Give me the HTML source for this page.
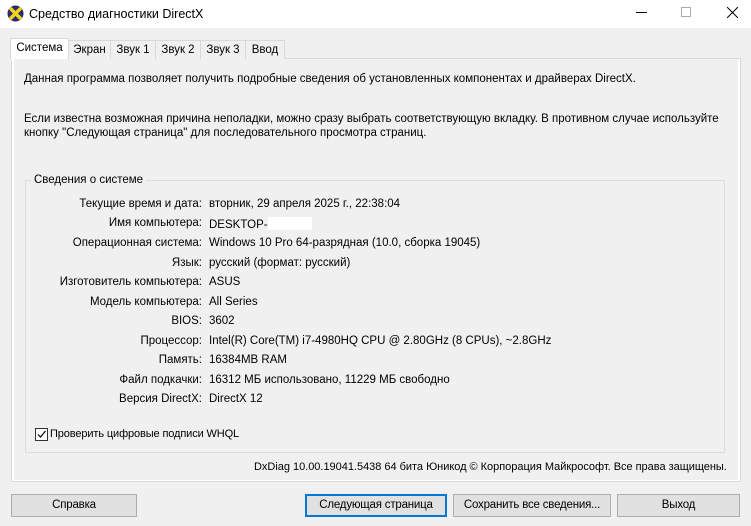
<!DOCTYPE html>
<html><head><meta charset="utf-8"><style>
*{margin:0;padding:0;box-sizing:border-box}
body{width:751px;height:526px;background:#f0f0f0;font-family:"Liberation Sans",sans-serif;font-size:11.5px;color:#000;position:relative;overflow:hidden}
.a{position:absolute;white-space:nowrap}
.tb{position:absolute;left:0;top:0;width:751px;height:28px;background:#fff}
.tab{position:absolute;top:40px;height:19px;border:1px solid #d9d9d9;border-bottom:none;background:#f0f0f0;padding:3px 0 0;text-align:center;white-space:nowrap}
.panel{position:absolute;left:11px;top:58px;width:730px;height:424px;border:1px solid #d9d9d9;background:#fff}
.grp{position:absolute;left:25px;top:180px;width:700px;height:273px;border:1px solid #dcdcdc}
.lbl{position:absolute;right:549px;white-space:nowrap}
.val{position:absolute;left:209px;white-space:nowrap}
.btn{position:absolute;top:494px;height:23px;border:1px solid #adadad;background:#e1e1e1;text-align:center;padding-top:4px;white-space:nowrap;font-size:11.5px;letter-spacing:-0.2px}
</style></head><body>
<div class="tb">
<svg class="a" style="left:7px;top:5px" width="17" height="17" viewBox="0 0 17 17"><circle cx="8.5" cy="8.5" r="8" fill="#2b2b6e"/><path d="M4 4 L13 13 M13 4 L4 13" stroke="#f2d21a" stroke-width="3.5" stroke-linecap="round"/></svg>
<div class="a" style="left:29px;top:7px;font-size:12.5px">Средство диагностики DirectX</div>
<div class="a" style="left:636px;top:12px;width:11px;height:1px;background:#000"></div>
<div class="a" style="left:681px;top:7px;width:10px;height:10px;border:1px solid #aaa"></div>
<svg class="a" style="left:727px;top:7px" width="11" height="11"><path d="M0 0L11 11M11 0L0 11" stroke="#000" stroke-width="1"/></svg>
</div>
<div class="panel"></div>
<div class="tab" style="left:68px;width:43px">Экран</div>
<div class="tab" style="left:110px;width:46px">Звук 1</div>
<div class="tab" style="left:155px;width:46px">Звук 2</div>
<div class="tab" style="left:200px;width:46px">Звук 3</div>
<div class="tab" style="left:245px;width:40px">Ввод</div>
<div class="tab" style="left:10px;top:38px;height:22px;width:59px;background:#fff;border-color:#d9d9d9">Система</div>
<div class="a" style="left:13px;top:59px;width:725px;height:421px;background:#f0f0f0;border-left:1px solid #fff"></div>
<div class="a" style="left:24px;top:73px">Данная программа позволяет получить подробные сведения об установленных компонентах и драйверах DirectX.</div>
<div class="a" style="left:24px;top:112px;line-height:14px">Если известна возможная причина неполадки, можно сразу выбрать соответствующую вкладку. В противном случае используйте<br>кнопку "Следующая страница" для последовательного просмотра страниц.</div>
<div class="grp"></div>
<div class="a" style="left:31px;top:174px;background:#f0f0f0;padding:0 3px">Сведения о системе</div>
<div class="lbl" style="top:198px">Текущие время и дата:</div><div class="val" style="top:198px">вторник, 29 апреля 2025 г., 22:38:04</div>
<div class="lbl" style="top:217px">Имя компьютера:</div><div class="val" style="top:217px">DESKTOP-<span style="display:inline-block;width:44px;height:13px;background:#fff;vertical-align:-2px"></span></div>
<div class="lbl" style="top:237px">Операционная система:</div><div class="val" style="top:237px">Windows 10 Pro 64-разрядная (10.0, сборка 19045)</div>
<div class="lbl" style="top:257px">Язык:</div><div class="val" style="top:257px">русский (формат: русский)</div>
<div class="lbl" style="top:276px">Изготовитель компьютера:</div><div class="val" style="top:276px">ASUS</div>
<div class="lbl" style="top:296px">Модель компьютера:</div><div class="val" style="top:296px">All Series</div>
<div class="lbl" style="top:315px">BIOS:</div><div class="val" style="top:315px">3602</div>
<div class="lbl" style="top:335px">Процессор:</div><div class="val" style="top:335px">Intel(R) Core(TM) i7-4980HQ CPU @ 2.80GHz (8 CPUs), ~2.8GHz</div>
<div class="lbl" style="top:354px">Память:</div><div class="val" style="top:354px">16384MB RAM</div>
<div class="lbl" style="top:374px">Файл подкачки:</div><div class="val" style="top:374px">16312 МБ использовано, 11229 МБ свободно</div>
<div class="lbl" style="top:393px">Версия DirectX:</div><div class="val" style="top:393px">DirectX 12</div>
<div class="a" style="left:35px;top:428px;width:13px;height:13px;border:1px solid #333;background:#fff"></div>
<svg class="a" style="left:36px;top:429px" width="11" height="11"><path d="M2 5.5L4.5 8L9.5 2" stroke="#000" stroke-width="1.2" fill="none"/></svg>
<div class="a" style="left:50px;top:428px;font-size:11px;letter-spacing:-0.12px">Проверить цифровые подписи WHQL</div>
<div class="a" style="left:254px;top:461px;font-size:11px;letter-spacing:-0.02px">DxDiag 10.00.19041.5438 64 бита Юникод © Корпорация Майкрософт. Все права защищены.</div>
<div class="btn" style="left:11px;width:126px">Справка</div>
<div class="btn" style="left:305px;width:142px;border:2px solid #0078d7;padding-top:3px">Следующая страница</div>
<div class="btn" style="left:453px;width:158px">Сохранить все сведения...</div>
<div class="btn" style="left:617px;width:123px">Выход</div>
</body></html>
